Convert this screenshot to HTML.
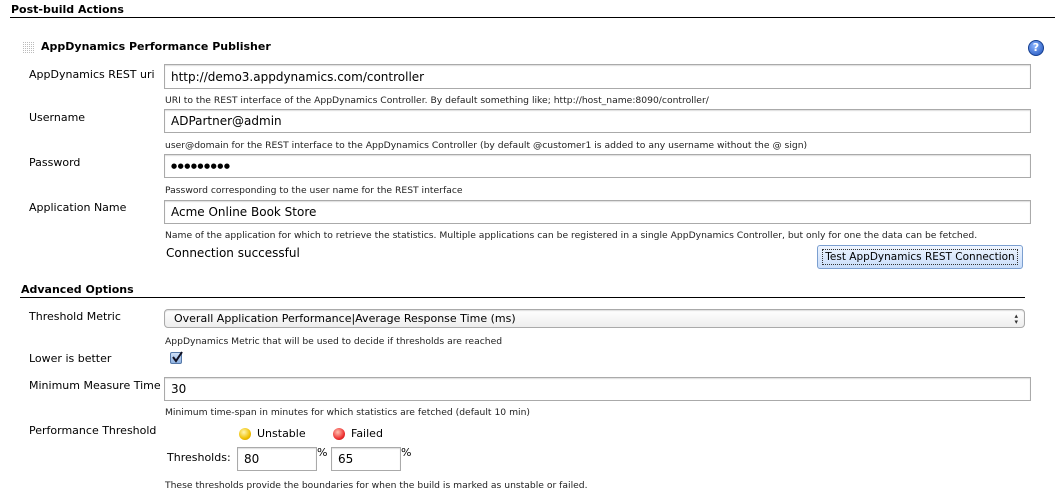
<!DOCTYPE html>
<html><head><style>
body{margin:0;width:1055px;height:494px;background:#fff;position:relative;overflow:hidden;font-family:"DejaVu Sans",Verdana,sans-serif;color:#000}
.a{position:absolute;white-space:nowrap}
.l{font-size:11px}
.h{font-size:9.2px;color:#222}
.b{font-weight:bold;font-size:11px}
.in{position:absolute;border:1px solid #aaa;box-shadow:inset 0 1px 1px #ddd;background:#fff;font-size:12px;box-sizing:border-box;padding-left:6px;display:flex;align-items:center}
.hr{position:absolute;height:1px;background:#000}
</style></head><body>
<div class="a b" style="left:11px;top:3px">Post-build Actions</div>
<div class="hr" style="left:10px;top:17px;width:1045px"></div>
<div class="a" style="left:22px;top:41px;width:12px;height:12px;background-image:linear-gradient(90deg,#fff 50%,transparent 50%),linear-gradient(#fff 50%,#bbb 50%);background-size:2px 2px,2px 2px"></div>
<div class="a b" style="left:41px;top:40px">AppDynamics Performance Publisher</div>
<div class="a" style="left:1028px;top:40px;width:16px;height:16px;border-radius:50%;background:radial-gradient(circle at 40% 35%,#8ab4ff,#1c4fb8);border:1px solid #163f8f;box-sizing:border-box;color:#fff;font:bold 11px 'DejaVu Sans';text-align:center;line-height:14px">?</div>

<div class="a l" style="left:29px;top:68px">AppDynamics REST uri</div>
<div class="in" style="left:164px;top:64px;width:867px;height:25px">http://demo3.appdynamics.com/controller</div>
<div class="a h" style="left:165px;top:95px">URI to the REST interface of the AppDynamics Controller. By default something like; http://host_name:8090/controller/</div>

<div class="a l" style="left:29px;top:111px">Username</div>
<div class="in" style="left:164px;top:109px;width:867px;height:24px">ADPartner@admin</div>
<div class="a h" style="left:165px;top:140px">user@domain for the REST interface to the AppDynamics Controller (by default @customer1 is added to any username without the @ sign)</div>

<div class="a l" style="left:29px;top:156px">Password</div>
<div class="in" style="left:164px;top:154px;width:867px;height:24px;font-size:7px;letter-spacing:0.5px">●●●●●●●●●</div>
<div class="a h" style="left:165px;top:185px">Password corresponding to the user name for the REST interface</div>

<div class="a l" style="left:29px;top:201px">Application Name</div>
<div class="in" style="left:164px;top:200px;width:867px;height:24px">Acme Online Book Store</div>
<div class="a h" style="left:165px;top:230px">Name of the application for which to retrieve the statistics. Multiple applications can be registered in a single AppDynamics Controller, but only for one the data can be fetched.</div>
<div class="a" style="left:166px;top:246px;font-size:12px">Connection successful</div>
<div class="a" style="left:817px;top:245px;width:206px;height:24px;box-sizing:border-box;border:1px solid #7b9fd0;border-radius:3px;background:linear-gradient(#eef5ff,#c9ddfa);font-size:10.5px;display:flex;align-items:center;justify-content:center"><span style="outline:1px dotted #333;padding:1px 2px">Test AppDynamics REST Connection</span></div>

<div class="a b" style="left:21px;top:283px">Advanced Options</div>
<div class="hr" style="left:20px;top:297px;width:1005px"></div>
<div class="a l" style="left:29px;top:310px">Threshold Metric</div>
<div class="in" style="left:164px;top:309px;width:861px;height:19px;border-radius:4px;background:linear-gradient(#fff,#eee);font-size:11px;padding-left:9px">Overall Application Performance|Average Response Time (ms)<span style="position:absolute;right:6px;font-size:7px;line-height:6px;color:#333">▴<br>▾</span></div>
<div class="a h" style="left:165px;top:336px">AppDynamics Metric that will be used to decide if thresholds are reached</div>

<div class="a l" style="left:29px;top:352px">Lower is better</div>
<div class="a" style="left:170px;top:352px;width:12px;height:12px;box-sizing:border-box;border:1px solid #5578a8;border-radius:2px;background:linear-gradient(#cfe0f7,#8fb3e2)"><svg width="12" height="12" style="position:absolute;left:0;top:-2px"><path d="M2 6 L5 10 L11 1" stroke="#112" stroke-width="2" fill="none"/></svg></div>

<div class="a l" style="left:29px;top:379px">Minimum Measure Time</div>
<div class="in" style="left:164px;top:377px;width:867px;height:24px">30</div>
<div class="a h" style="left:165px;top:407px">Minimum time-span in minutes for which statistics are fetched (default 10 min)</div>

<div class="a l" style="left:29px;top:424px">Performance Threshold</div>
<div class="a" style="left:239px;top:428px;width:12px;height:12px;border-radius:50%;background:radial-gradient(circle at 40% 35%,#fff6b0,#f0c000 60%,#c08a00)"></div>
<div class="a l" style="left:257px;top:427px">Unstable</div>
<div class="a" style="left:333px;top:428px;width:12px;height:12px;border-radius:50%;background:radial-gradient(circle at 40% 35%,#ffc0b0,#e33 60%,#a00)"></div>
<div class="a l" style="left:351px;top:427px">Failed</div>
<div class="a l" style="left:167px;top:451px">Thresholds:</div>
<div class="in" style="left:237px;top:447px;width:80px;height:24px">80</div>
<div class="a l" style="left:317px;top:446px">%</div>
<div class="in" style="left:331px;top:447px;width:70px;height:24px">65</div>
<div class="a l" style="left:401px;top:446px">%</div>
<div class="a h" style="left:165px;top:480px">These thresholds provide the boundaries for when the build is marked as unstable or failed.</div>
</body></html>
